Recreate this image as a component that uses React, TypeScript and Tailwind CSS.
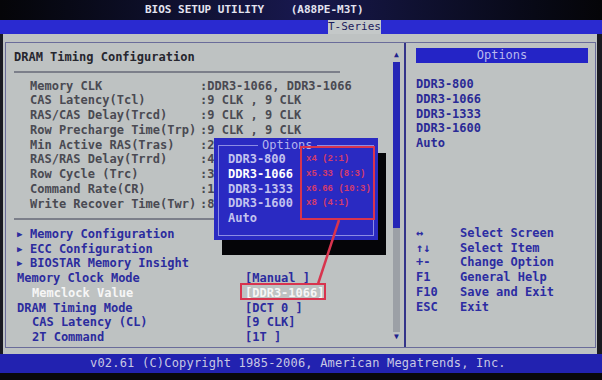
import React from 'react';

const timings = [
  ['Memory CLK', ':DDR3-1066, DDR3-1066'],
  ['CAS Latency(Tcl)', ':9 CLK , 9 CLK'],
  ['RAS/CAS Delay(Trcd)', ':9 CLK , 9 CLK'],
  ['Row Precharge Time(Trp)', ':9 CLK , 9 CLK'],
  ['Min Active RAS(Tras)', ':2'],
  ['RAS/RAS Delay(Trrd)', ':4'],
  ['Row Cycle (Trc)', ':3'],
  ['Command Rate(CR)', ':1'],
  ['Write Recover Time(Twr)', ':8'],
];

const settings = [
  { label: 'Memory Configuration', arrow: true },
  { label: 'ECC Configuration', arrow: true },
  { label: 'BIOSTAR Memory Insight', arrow: true },
  { label: 'Memory Clock Mode', value: '[Manual ]' },
  { label: 'Memclock Value', value: '[DDR3-1066]', indent: true, active: true },
  { label: 'DRAM Timing Mode', value: '[DCT 0 ]' },
  { label: 'CAS Latency (CL)', value: '[9 CLK]', indent: true },
  { label: '2T Command', value: '[1T ]', indent: true },
];

const help = [
  ['↔', 'Select Screen'],
  ['↑↓', 'Select Item'],
  ['+-', 'Change Option'],
  ['F1', 'General Help'],
  ['F10', 'Save and Exit'],
  ['ESC', 'Exit'],
];

const options = ['DDR3-800', 'DDR3-1066', 'DDR3-1333', 'DDR3-1600', 'Auto'];
const ratios = ['x4 (2:1)', 'x5.33 (8:3)', 'x6.66 (10:3)', 'x8 (4:1)'];

export default function App() {
  return (
    <div className="relative w-[602px] h-[380px] overflow-hidden bg-[#08080c] flex flex-col font-['DejaVu_Sans_Mono','Liberation_Mono',monospace] font-bold text-[12px]">
      {/* Title */}
      <div className="h-5 flex items-center pl-[145px] bg-linear-to-r from-[#050508] via-[#18184e] to-[#050508] text-[#e4e4f0] text-[11px] whitespace-pre">
        BIOS SETUP UTILITY    (A88PE-M3T)
      </div>

      {/* Tab row */}
      <div className="h-[14px] flex bg-[#2a2ad0]">
        <div className="w-[328px]" />
        <div className="w-[53px] bg-[#c4c8c8] text-[#1c1c5c] text-[11px] leading-[14px] font-normal whitespace-pre">T-Series</div>
      </div>

      {/* Body */}
      <div className="flex-1 flex flex-col bg-[#bec2c2] border-l-[3px] border-r-[5px] border-[#1a1a22] pl-[2px] pr-[1px] pt-2 pb-[6px]">
        <div className="flex-1 flex border border-[#6a6c9a]">
          {/* Left panel */}
          <div className="w-[400px] flex border-r-2 border-[#34348a]">
            <div className="flex-1 pl-[8px] pt-[7px]">
              <div className="leading-[15px] text-[#26262e]">DRAM Timing Configuration</div>
              <div className="mt-[6px] h-[1.5px] w-[326px] bg-[#7c7f8a]" />
              <div className="mt-[6px] pl-[16px] text-[#4a4a52]">
                {timings.map(([label, value]) => (
                  <div key={label} className="flex leading-[14.75px] whitespace-pre">
                    <span className="w-[170px]">{label}</span>
                    <span>{value}</span>
                  </div>
                ))}
              </div>
              <div className="mt-[7px] h-[1.5px] w-[326px] bg-[#7c7f8a]" />
              <div className="mt-[7px] pl-[3px] text-[#2c2c9e]">
                {settings.map((s) => (
                  <div key={s.label} className="flex leading-[14.75px] whitespace-pre">
                    <span className={`w-[228px] flex items-center ${s.indent ? 'pl-[15px]' : ''} ${s.active ? 'text-[#f6f6f6]' : ''}`}>
                      {s.arrow && <span className="w-[13px] text-[9px]">▶</span>}
                      {s.label}
                    </span>
                    {s.value && <span className={s.active ? 'text-[#f6f6f6]' : ''}>{s.value}</span>}
                  </div>
                ))}
              </div>
            </div>
            {/* Scrollbar */}
            <div className="w-[7px] mr-[4px] flex flex-col items-center">
              <div className="h-[19px] flex items-end pb-[3px] text-[8px] leading-[8px] text-[#20208c]">▲</div>
              <div className="w-full h-[166px] bg-[#2626b6]" />
              <div className="w-full h-[104px] bg-[#9ca0a6]" />
              <div className="text-[8px] leading-[8px] text-[#20208c] mt-[1px]">▼</div>
            </div>
          </div>

          {/* Right panel */}
          <div className="flex-1 pl-[10px] pr-[7px] pt-[5px]">
            <div className="h-[15px] bg-[#2424c6] text-[#b8b8ee] leading-[15px] text-center font-normal">Options</div>
            <div className="mt-[14px] text-[#2a2a96]">
              {options.map((o) => (
                <div key={o} className="leading-[14.75px]">{o}</div>
              ))}
            </div>
            <div className="mt-[75px] text-[#2c2ca2]">
              {help.map(([k, d]) => (
                <div key={d} className="flex leading-[14.75px]">
                  <span className="w-[44px]">{k}</span>
                  <span>{d}</span>
                </div>
              ))}
            </div>
          </div>
        </div>
      </div>

      {/* Footer */}
      <div className="h-[19px] bg-[#2222b0] text-[#c8c8e4] leading-[19px] pl-[90px] tracking-[0.2px] whitespace-pre font-normal">
        v02.61 (C)Copyright 1985-2006, American Megatrends, Inc.
      </div>
      <div className="h-[7px] bg-[#08080c]" />

      {/* Options popup */}
      <div className="absolute left-[222px] top-[153px] w-[164px] h-[102px] bg-[#050508]" />
      <div className="absolute left-[214px] top-[138px] w-[164px] h-[102px] bg-[#2a2ac2]">
        <div className="absolute inset-[4px] top-[7px] border border-[#8c8ce4]" />
        <div className="absolute left-[44px] top-[1px] px-[4px] bg-[#2a2ac2] text-[#b4b4ec] leading-[13px] font-normal">Options</div>
        <div className="absolute left-[14px] top-[14px] text-[#c2c2ee]">
          {options.map((o) => (
            <div key={o} className={`leading-[14.75px] ${o === 'DDR3-1066' ? 'text-white' : ''}`}>{o}</div>
          ))}
        </div>
      </div>

      {/* Annotations */}
      <div className="absolute left-[300px] top-[146px] w-[75px] h-[74px] border-2 border-[#d8344e] pl-[4px] pt-[4px] text-[#d43c6c] text-[9px] font-bold font-['Liberation_Mono',monospace]">
        {ratios.map((r) => (
          <div key={r} className="leading-[14.75px] whitespace-pre">{r}</div>
        ))}
      </div>
      <svg className="absolute left-0 top-0 pointer-events-none" width="602" height="380">
        <line x1="339" y1="220" x2="318" y2="284" stroke="#d8344e" strokeWidth="2.5" />
      </svg>
      <div className="absolute left-[240px] top-[283px] w-[86px] h-[17px] border-[2.5px] border-[#d8344e]" />
    </div>
  );
}
